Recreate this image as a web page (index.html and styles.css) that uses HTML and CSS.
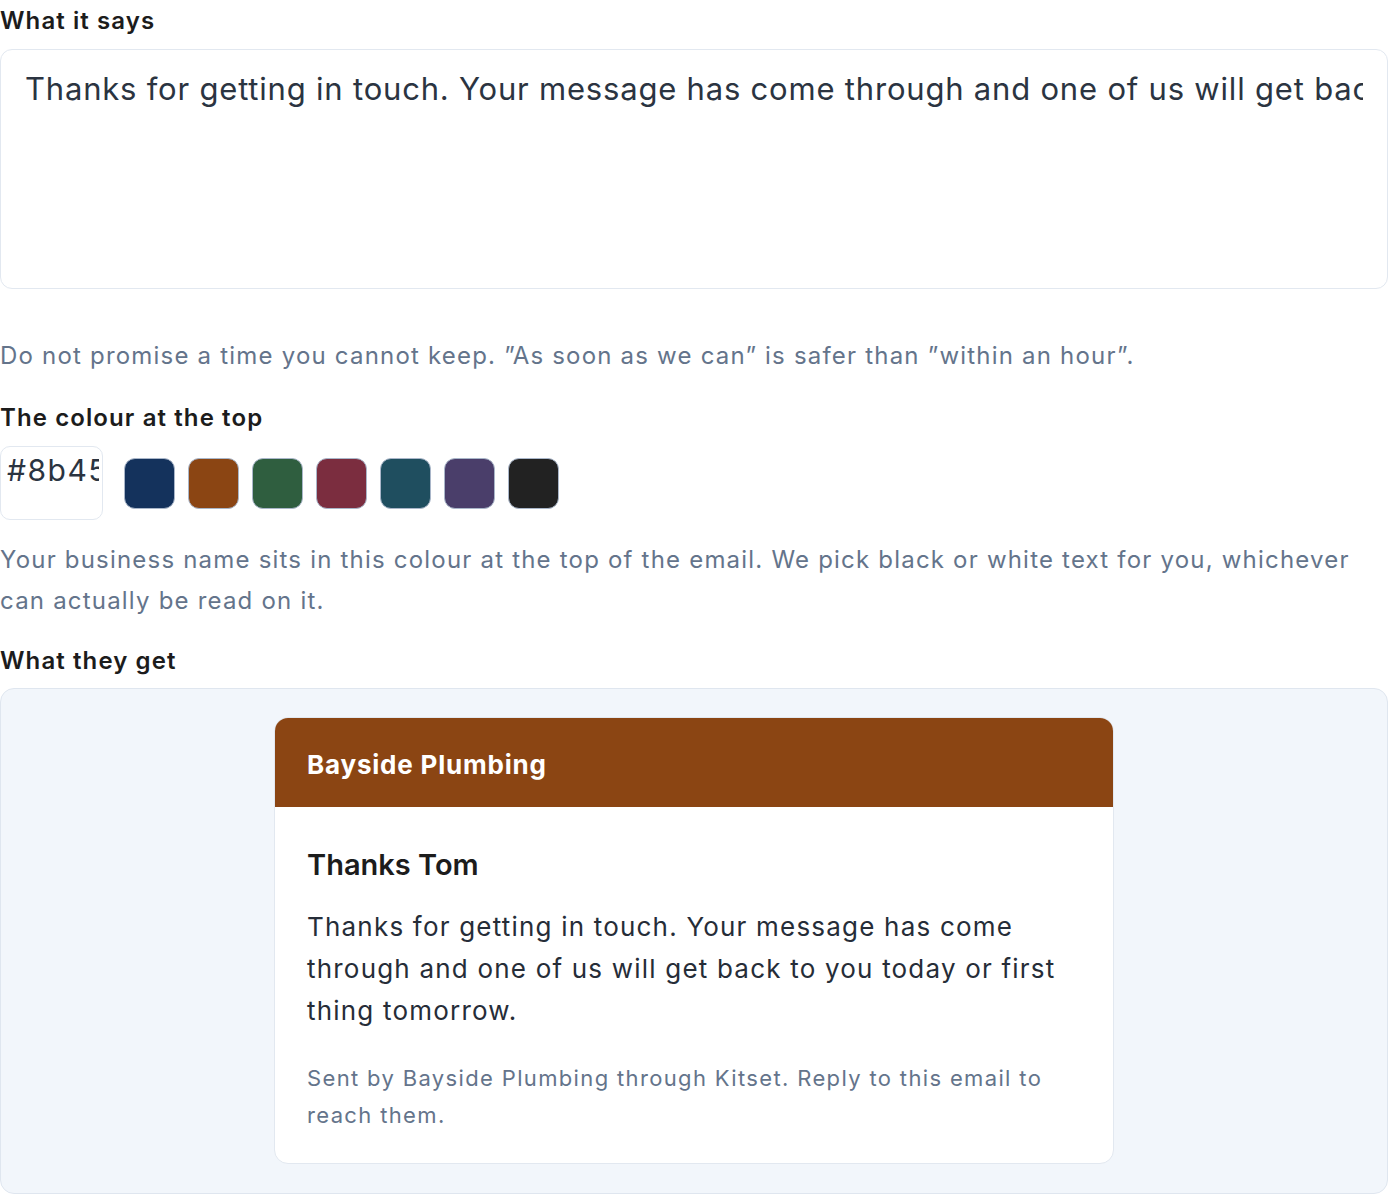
FILE: index.html
```html
<!DOCTYPE html>
<html lang="en">
<head>
    <meta charset="UTF-8">
    <meta name="viewport" content="width=device-width, initial-scale=1.0">
    <title>Auto reply</title>
    <link rel="stylesheet" href="styles.css">
</head>
<body>
    <div class="page">
        <label class="field-label" for="reply-text">What it says</label>
        <div class="textarea-box">
            <textarea id="reply-text" wrap="off" readonly>Thanks for getting in touch. Your message has come through and one of us will get back to you today or first thing tomorrow.</textarea>
        </div>
        <p class="hint hint-first">Do not promise a time you cannot keep. ”As soon as we can” is safer than ”within an hour”.</p>

        <label class="field-label" for="hex">The colour at the top</label>
        <div class="colour-row">
            <input type="text" id="hex" class="hex-field" value="#8b4513">
            <div class="swatches">
                <button class="swatch" style="background-color: #14325c"></button>
                <button class="swatch" style="background-color: #8b4513"></button>
                <button class="swatch" style="background-color: #2f5e3f"></button>
                <button class="swatch" style="background-color: #7b2d3f"></button>
                <button class="swatch" style="background-color: #1f4e5f"></button>
                <button class="swatch" style="background-color: #4a3e6a"></button>
                <button class="swatch" style="background-color: #222222"></button>
            </div>
        </div>
        <p class="hint hint-second">Your business name sits in this colour at the top of the email. We pick black or white text for you, whichever can actually be read on it.</p>

        <div class="field-label label-last">What they get</div>
        <section class="preview">
            <div class="email">
                <div class="email-head">Bayside Plumbing</div>
                <div class="email-body">
                    <h3>Thanks Tom</h3>
                    <p class="email-text">Thanks for getting in touch. Your message has come through and one of us will get back to you today or first thing tomorrow.</p>
                    <p class="email-foot">Sent by Bayside Plumbing through Kitset. Reply to this email to reach them.</p>
                </div>
            </div>
        </section>
    </div>
</body>
</html>
```

FILE: styles.css
```css
body {
    font-family: Inter, "Noto Sans", sans-serif;
    margin: 0;
    padding: 0;
    background-color: #fff;
    color: #1c1c1c;
}
.page {
    width: 1388px;
    padding-top: 4px;
}
.field-label {
    display: block;
    font-size: 24px;
    line-height: 33px;
    font-weight: 600;
    letter-spacing: 1.1px;
    color: #1c1c1c;
    margin-bottom: 12px;
}
.label-last {
    margin-bottom: 11px;
}

/* text box */
.textarea-box {
    height: 240px;
    box-sizing: border-box;
    border: 1px solid #e2e8f0;
    border-radius: 12px;
    padding: 19px 24px 0;
}
.textarea-box textarea {
    display: block;
    width: 100%;
    height: 100%;
    border: none;
    padding: 0;
    margin: 0;
    resize: none;
    overflow: hidden;
    outline: none;
    font-family: inherit;
    font-size: 31px;
    line-height: 40px;
    letter-spacing: 0.8px;
    color: #2b3441;
    background: transparent;
}
.hint {
    font-size: 24px;
    line-height: 41px;
    letter-spacing: 1.2px;
    color: #64748b;
    margin: 0;
}
.hint-first {
    margin-top: 46px;
    margin-bottom: 25px;
}
.hint-second {
    margin-top: 19px;
    margin-bottom: 23px;
}

/* colour picker */
.colour-row {
    display: flex;
    align-items: center;
    gap: 21px;
}
.hex-field {
    width: 103px;
    height: 74px;
    box-sizing: border-box;
    border: 1px solid #e2e8f0;
    border-radius: 10px;
    padding: 4px 3px 30px 6px;
    font-family: inherit;
    font-size: 30px;
    letter-spacing: 1.5px;
    color: #2b3441;
    outline: none;
}
.swatches {
    display: flex;
    gap: 13px;
}
.swatch {
    width: 51px;
    height: 51px;
    box-sizing: border-box;
    border: 1.5px solid #a9b6c9;
    border-radius: 11px;
    padding: 0;
    cursor: pointer;
}

/* email preview */
.preview {
    background-color: #f2f6fb;
    border: 1px solid #dfe6ef;
    border-radius: 14px;
    padding: 28px 0 29px;
}
.email {
    max-width: 840px;
    margin: 0 auto;
    background-color: white;
    border: 1px solid #e2e8f0;
    border-radius: 14px;
    overflow: hidden;
    box-sizing: border-box;
}
.email-head {
    background-color: #8b4513;
    color: white;
    font-size: 26px;
    font-weight: 700;
    line-height: 42px;
    letter-spacing: 0.8px;
    padding: 26px 32px 21px;
}
.email-body {
    padding: 38px 32px 29px;
}
.email-body h3 {
    margin: 0 0 22px;
    font-size: 29px;
    line-height: 39px;
    font-weight: 600;
    color: #1c1c1c;
}
.email-text {
    margin: 0 0 28px;
    font-size: 26px;
    line-height: 42px;
    letter-spacing: 1.2px;
    color: #262d38;
}
.email-foot {
    margin: 0;
    font-size: 22px;
    line-height: 37px;
    letter-spacing: 1.35px;
    color: #64748b;
}
```
